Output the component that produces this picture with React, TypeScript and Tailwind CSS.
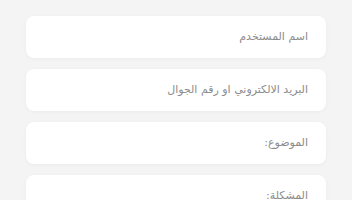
import React from "react";

const fields = [
  "اسم المستخدم",
  "البريد الالكتروني او رقم الجوال",
  "الموضوع:",
  "المشكلة:",
];

export default function App() {
  return (
    <div className="w-[352px] h-[200px] overflow-hidden bg-[#f4f4f4] pt-4" dir="rtl">
      <div className="mx-[26px] flex flex-col gap-[11px]">
        {fields.map((f) => (
          <div
            key={f}
            className="h-[42px] shrink-0 rounded-lg bg-white shadow-[0_1px_4px_rgba(0,0,0,0.04)] flex items-center pr-[18px] text-[11px] text-[#8c8c8c]"
            style={{ fontFamily: '"DejaVu Sans", sans-serif' }}
          >
            {f}
          </div>
        ))}
      </div>
    </div>
  );
}
